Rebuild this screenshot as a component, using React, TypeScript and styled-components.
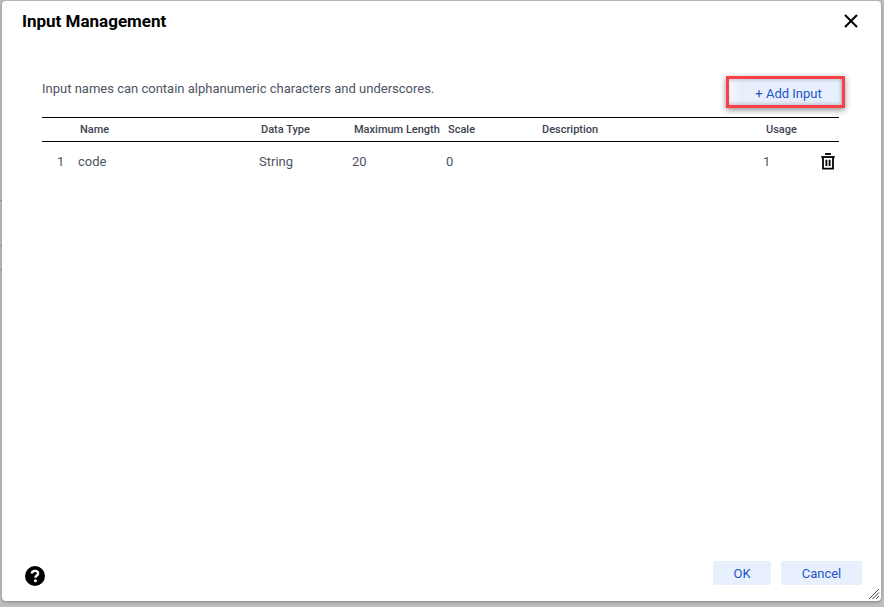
import React from "react";
import styled, { createGlobalStyle } from "styled-components";

const Global = createGlobalStyle`
  html, body { margin: 0; padding: 0; height: 100%; overflow: hidden; }
  body { font-family: Roboto, "Liberation Sans", sans-serif; }
  #root { height: 100%; }
`;

const Backdrop = styled.div`
  width: 884px;
  height: 607px;
  box-sizing: border-box;
  padding: 1px 3px 6px 2px;
  background-color: #bdbdbd;
  background-image:
    linear-gradient(#9a9a9a, #9a9a9a),
    linear-gradient(#9a9a9a, #9a9a9a),
    linear-gradient(#9a9a9a, #9a9a9a);
  background-repeat: no-repeat;
  background-size: 2px 1px;
  background-position: 0 200px, 0 245px, 0 269px;
`;

const Dialog = styled.div`
  position: relative;
  height: 100%;
  display: flex;
  flex-direction: column;
  background: #fff;
  border-radius: 4px;
  box-shadow: 0 1px 3px rgba(0, 0, 0, 0.3);
`;

const Header = styled.header`
  display: flex;
  align-items: center;
  justify-content: space-between;
  height: 40px;
  padding: 0 23px 0 20px;
`;

const Title = styled.h2`
  margin: 0;
  font-size: 17px;
  font-weight: 700;
  color: #000;
`;

const IconButton = styled.button`
  display: flex;
  padding: 0;
  border: 0;
  background: none;
  color: #000;
`;

const HelpButton = styled(IconButton)`
  margin-top: 5px;
`;

const Body = styled.main`
  flex: 1;
  padding: 35px 42px 0 40px;
`;

const Intro = styled.div`
  display: flex;
  justify-content: space-between;
  align-items: flex-start;
  height: 41px;
`;

const Hint = styled.p`
  margin: 5px 0 0;
  font-size: 13px;
  line-height: 16px;
  color: #4d5463;
`;

const Highlight = styled.div`
  width: 119px;
  height: 32px;
  margin-right: -6px;
  box-sizing: border-box;
  border: 3px solid #fb3f46;
  box-shadow: 0 2px 6px rgba(0, 0, 0, 0.45);
`;

const AddButton = styled.button`
  width: 100%;
  height: 100%;
  padding: 2px 0 0 6px;
  border: 0;
  background: linear-gradient(90deg, #f4f7fd 0, #e8effc 12px);
  box-shadow: inset 0 2px 3px rgba(0, 0, 0, 0.12), inset -2px -2px 3px rgba(0, 0, 0, 0.14);
  font: 400 13px Roboto, sans-serif;
  color: #1d56c9;
`;

const columns = "36px 181px 93px 94px 94px 224px 57px 1fr";

const HeadRow = styled.div`
  display: grid;
  grid-template-columns: ${columns};
  align-items: center;
  height: 23px;
  border-top: 1px solid #000;
  border-bottom: 1px solid #000;
`;

const HeadCell = styled.div`
  padding-left: 2px;
  font-size: 11px;
  font-weight: 500;
  white-space: nowrap;
  color: #3e4350;
`;

const Row = styled.div`
  display: grid;
  grid-template-columns: ${columns};
  align-items: center;
  height: 38px;
`;

const Cell = styled.div`
  font-size: 13px;
  color: #4d5463;
`;

const IndexCell = styled(Cell)`
  padding-left: 15px;
`;

const UsageCell = styled(Cell)`
  margin-left: -1px;
`;

const Footer = styled.footer`
  display: flex;
  align-items: flex-start;
  height: 40px;
  padding: 0 19px 0 23px;
`;

const Actions = styled.div`
  margin-left: auto;
  display: flex;
  gap: 10px;
`;

const ActionButton = styled.button<{ $w: number }>`
  width: ${(p) => p.$w}px;
  height: 24px;
  padding: 0;
  border: 0;
  border-radius: 2px;
  background: #e9f0fd;
  font: 400 13px Roboto, sans-serif;
  color: #1d56c9;
`;

const Grip = styled.svg`
  position: absolute;
  right: 1px;
  bottom: 1px;
`;

const CloseIcon = () => (
  <svg width="14" height="14" viewBox="0 0 14 14" fill="none" stroke="#000" strokeWidth="2">
    <path d="M1 1 L13 13 M13 1 L1 13" />
  </svg>
);

const TrashIcon = () => (
  <svg width="14" height="17" viewBox="0 0 14 17" fill="none" stroke="#000" strokeWidth="1.8">
    <path d="M4 1 H10" />
    <path d="M.3 4 H13.7" />
    <path d="M2 4 V15.6 H12 V4" />
    <path d="M5.4 6.8 V13 M8.6 6.8 V13" />
  </svg>
);

const HelpIcon = () => (
  <svg width="20" height="20" viewBox="0 0 20 20">
    <circle cx="10" cy="10" r="10" fill="#000" />
    <path
      d="M6.9 7.6 C6.9 5.8 8.3 4.9 10 4.9 C11.8 4.9 13.1 5.9 13.1 7.5 C13.1 9.4 10.4 9.6 10.4 11.7"
      fill="none"
      stroke="#fff"
      strokeWidth="2.4"
    />
    <circle cx="10.4" cy="14.8" r="1.5" fill="#fff" />
  </svg>
);

const GripIcon = () => (
  <Grip width="12" height="12" viewBox="0 0 12 12" stroke="#333" strokeWidth="0.9">
    <path d="M1 11 L11 1 M4.5 11 L11 4.5 M8 11 L11 8" />
  </Grip>
);

export default function App() {
  return (
    <>
      <Global />
      <Backdrop>
        <Dialog>
          <Header>
            <Title>Input Management</Title>
            <IconButton aria-label="Close">
              <CloseIcon />
            </IconButton>
          </Header>
          <Body>
            <Intro>
              <Hint>Input names can contain alphanumeric characters and underscores.</Hint>
              <Highlight>
                <AddButton>+ Add Input</AddButton>
              </Highlight>
            </Intro>
            <HeadRow>
              <HeadCell />
              <HeadCell>Name</HeadCell>
              <HeadCell>Data Type</HeadCell>
              <HeadCell>Maximum Length</HeadCell>
              <HeadCell>Scale</HeadCell>
              <HeadCell>Description</HeadCell>
              <HeadCell>Usage</HeadCell>
              <HeadCell />
            </HeadRow>
            <Row>
              <IndexCell>1</IndexCell>
              <Cell>code</Cell>
              <Cell>String</Cell>
              <Cell>20</Cell>
              <Cell>0</Cell>
              <Cell />
              <UsageCell>1</UsageCell>
              <IconButton aria-label="Delete">
                <TrashIcon />
              </IconButton>
            </Row>
          </Body>
          <Footer>
            <HelpButton aria-label="Help">
              <HelpIcon />
            </HelpButton>
            <Actions>
              <ActionButton $w={58}>OK</ActionButton>
              <ActionButton $w={81}>Cancel</ActionButton>
            </Actions>
          </Footer>
          <GripIcon />
        </Dialog>
      </Backdrop>
    </>
  );
}
